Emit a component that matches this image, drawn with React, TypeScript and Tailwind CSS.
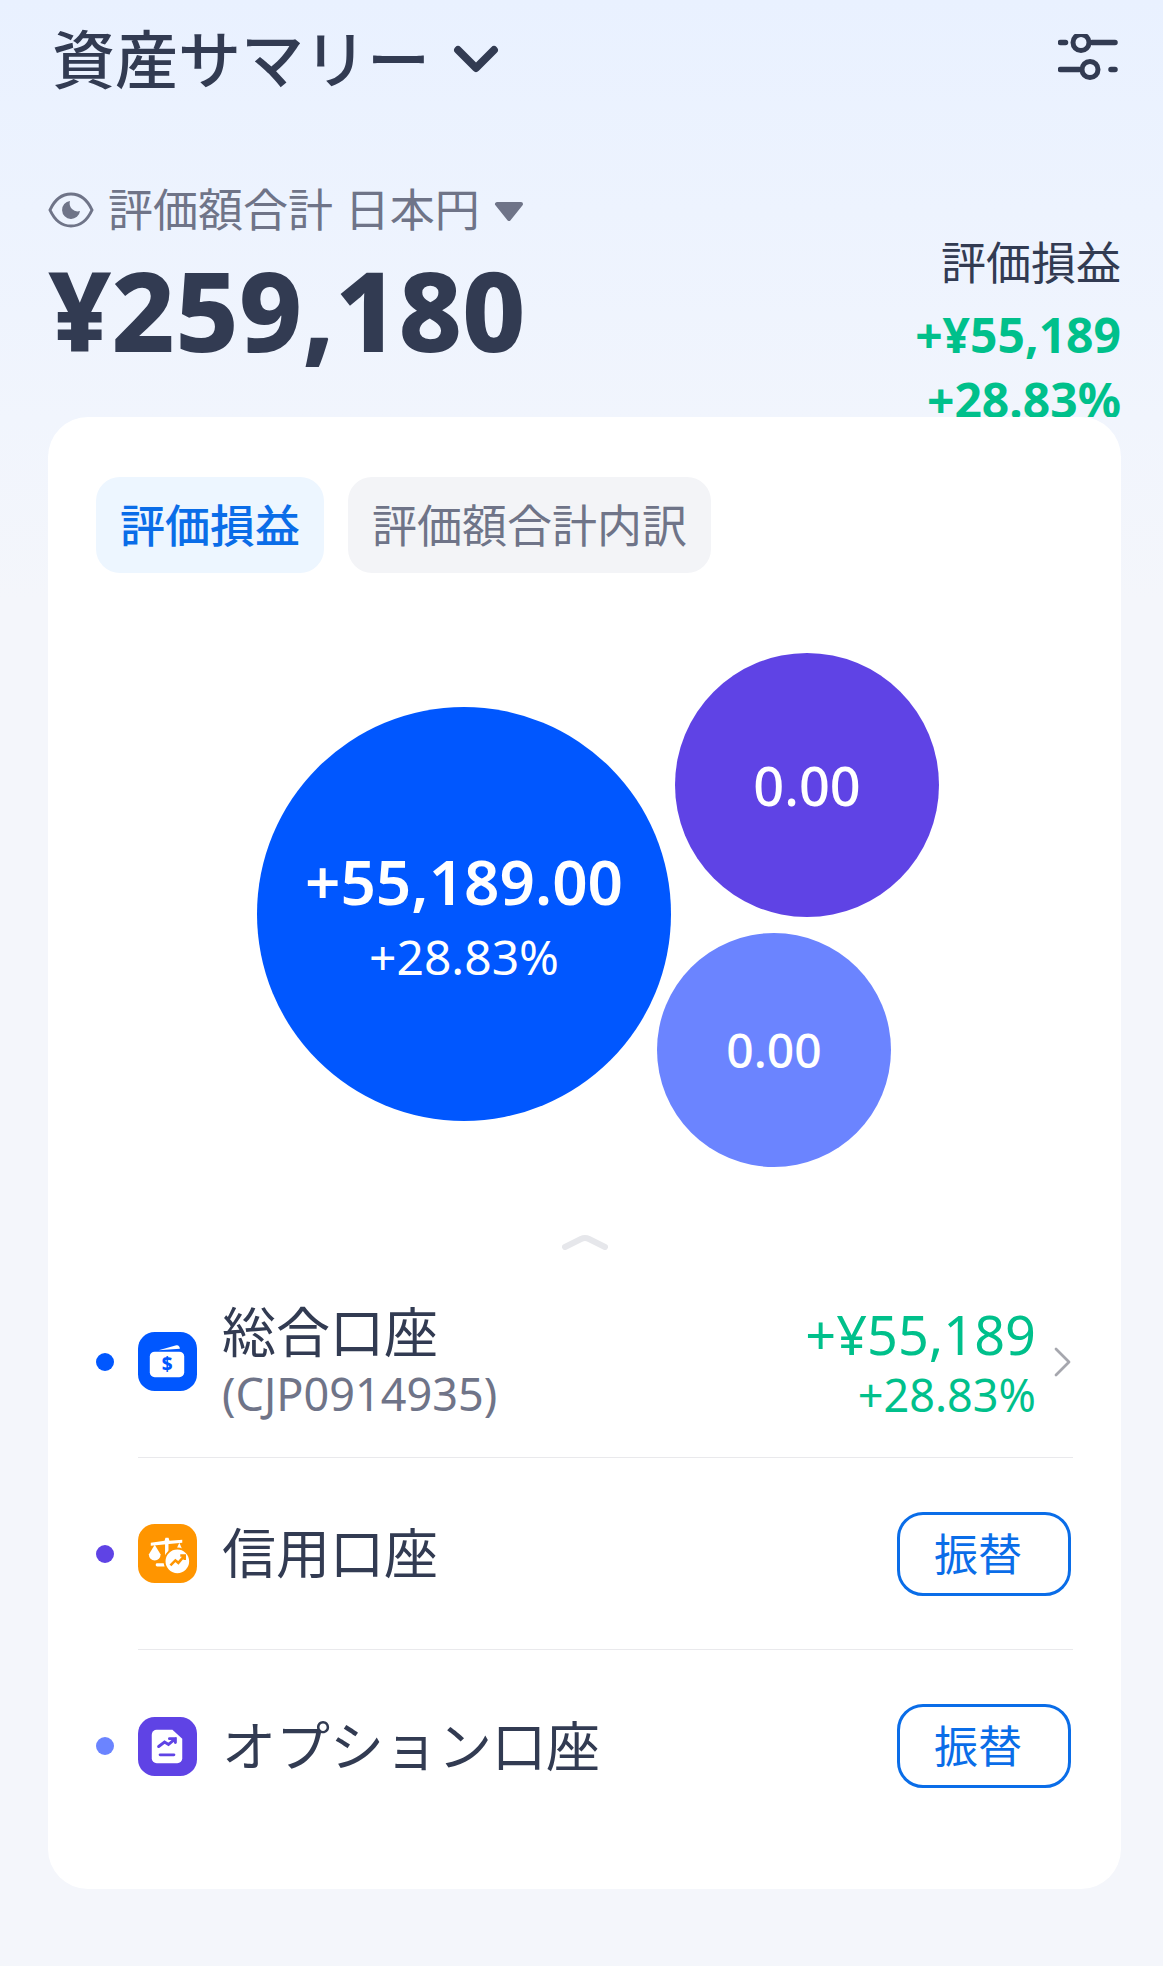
import * as React from "react";
import { ChevronDown } from "lucide-react";

const CJK = "font-['Noto_Sans','Noto_Sans_CJK_JP',sans-serif]";

const SlidersIcon = () => (
  <svg width="60" height="50" viewBox="0 0 60 50" fill="none" stroke="#323b52" strokeWidth="5.5" strokeLinecap="round">
    <path d="M2.500 8.500h5M34 8.500h23M2.500 35.500h19M53 35.500h4" />
    <circle cx="23" cy="8.500" r="8" strokeWidth="5" />
    <circle cx="32" cy="35.500" r="8" strokeWidth="5" />
  </svg>
);

const EyeIcon = () => (
  <svg width="46" height="36" viewBox="0 0 46 36" fill="none">
    <path d="M2 18C7 7 15 2 23 2s16 5 21 16c-5 11-13 16-21 16S7 29 2 18Z" stroke="#6f7488" strokeWidth="3" />
    <path d="M22 9a9 9 0 1 0 10 10 8 8 0 0 1-10-10Z" fill="#6f7488" />
  </svg>
);

const CaretIcon = () => (
  <svg width="30" height="21" viewBox="0 0 30 21" className="ml-[14px] mt-[4px]">
    <path d="M3 3h24L15 18Z" fill="#6f7488" stroke="#6f7488" strokeWidth="4" strokeLinejoin="round" />
  </svg>
);

const WalletIcon = () => (
  <svg width="59" height="59" viewBox="0 0 60 60">
    <rect width="60" height="60" rx="17" fill="#0057ff" />
    <path d="M21 18.500l18-5c2-.4 3.300.8 3.600 3.500Z" fill="#fff" />
    <rect x="12" y="20" width="35" height="26" rx="5" fill="#fff" />
    <text x="29.500" y="39.500" textAnchor="middle" fontSize="19" fontWeight="800" fill="#0057ff" fontFamily="'Noto Sans',sans-serif">$</text>
  </svg>
);

const ScaleIcon = () => (
  <svg width="59" height="59" viewBox="0 0 60 60">
    <rect width="60" height="60" rx="17" fill="#ff9500" />
    <g fill="#fff">
      <path d="M13 19l14-2 1-3h3l1 3 13-1v3l-32 3Z" />
      <path d="M17 21l-6 10a6 6 0 0 0 12 0Z" />
      <rect x="27.500" y="15" width="3.500" height="26" />
      <rect x="18" y="40" width="14" height="3.200" rx="1.500" />
      <path d="M42 19l4 9h-8Z" />
      <circle cx="40" cy="38" r="13" stroke="#ff9500" strokeWidth="2" />
    </g>
    <path d="M33 42l5-5 3 2.500 6-7M43 32h4.500v4.500" fill="none" stroke="#ff9500" strokeWidth="2.600" />
  </svg>
);

const ChartDocIcon = () => (
  <svg width="59" height="59" viewBox="0 0 60 60">
    <rect width="60" height="60" rx="17" fill="#5f43e5" />
    <path d="M19 13h16l10 9v20a5 5 0 0 1-5 5H19a5 5 0 0 1-5-5V18a5 5 0 0 1 5-5Z" fill="#fff" />
    <path d="M21 30l6-4.500 4 2.500 7-6M32 22h6v4" fill="none" stroke="#5f43e5" strokeWidth="3" strokeLinecap="round" />
    <rect x="21" y="37" width="17" height="3" rx="1.500" fill="#5f43e5" />
  </svg>
);

const TransferButton = () => (
  <button className="mr-[2px] flex h-[84px] w-[174px] items-center justify-center rounded-[26px] border-[3px] border-[#0a6de8] pr-[12px] text-[44px] text-[#0a6de8]">
    振替
  </button>
);

const AccountRow = ({
  dot,
  icon,
  last,
  children,
}: {
  dot: string;
  icon: React.ReactNode;
  last?: boolean;
  children: React.ReactNode;
}) => (
  <div className="flex items-center">
    <span className="mr-[24px] h-[18px] w-[18px] rounded-full" style={{ background: dot }} />
    <div className={`flex h-[192px] flex-1 items-center border-[#e9e9ec] ${last ? "" : "border-b"}`}>
      <div className="mr-[25px] shrink-0">{icon}</div>
      {children}
    </div>
  </div>
);

export default function App() {
  return (
    <div className={`h-[1966px] w-[1163px] overflow-hidden bg-[linear-gradient(#e9f1ff_0px,#f1f5fd_420px,#f4f6fb_600px)] ${CJK} text-[#323b52]`}>
      {/* header block, the card cuts off whatever runs past its height */}
      <div className="h-[417px] overflow-hidden px-[42px]">
        <div className="flex h-[117px] items-center justify-between pl-[10px] pr-[3px]">
          <div className="flex items-center">
            <h1 className="text-[63px] font-medium leading-none">資産サマリー</h1>
            <ChevronDown size={72} strokeWidth={2.6} className="ml-[10px]" />
          </div>
          <SlidersIcon />
        </div>
        <div className="mt-[70px] flex items-center pl-[6px] text-[45px] leading-none text-[#6f7488]">
          <EyeIcon />
          <span className="ml-[14px]">評価額合計 日本円</span>
          <CaretIcon />
        </div>
        <div className="flex items-start justify-between pl-[6px]">
          <div className="mt-[2px] text-[110px] font-extrabold leading-[150px]">¥259,180</div>
          <div className="mt-[1px] text-right">
            <div className="text-[45px] leading-[60px]">評価損益</div>
            <div className="mt-[9px] text-[48px] font-bold leading-[65px] text-[#00c08b]">+¥55,189</div>
            <div className="text-[48px] font-bold leading-[65px] text-[#00c08b]">+28.83%</div>
          </div>
        </div>
      </div>

      <main className="ml-[48px] mr-[42px] h-[1472px] rounded-[40px] bg-white pl-[48px] pr-[48px] pt-[60px]">
        <div className="flex gap-[24px] text-[45px] leading-none">
          <div className="flex h-[96px] w-[228px] items-center justify-center rounded-[24px] bg-[#edf6ff] font-medium text-[#0a6de8]">評価損益</div>
          <div className="flex h-[96px] w-[363px] items-center justify-center rounded-[24px] bg-[#f3f4f7] text-[#6f7488]">評価額合計内訳</div>
        </div>

        {/* bubble chart, each bubble sits at its own spot on the canvas */}
        <div className="relative h-[618px] text-white">
          <div className="absolute left-[161px] top-[134px] flex h-[414px] w-[414px] flex-col items-center justify-center rounded-full bg-[#0057ff]">
            <div className="text-[62px] font-semibold leading-[84px]">+55,189.00</div>
            <div className="mt-[2px] text-[48px] leading-[64px]">+28.83%</div>
          </div>
          <div className="absolute left-[579px] top-[80px] flex h-[264px] w-[264px] items-center justify-center rounded-full bg-[#5f43e5] text-[54px] font-medium">0.00</div>
          <div className="absolute left-[561px] top-[360px] flex h-[234px] w-[234px] items-center justify-center rounded-full bg-[#6b84ff] text-[48px] font-medium">0.00</div>
        </div>

        <div className="flex h-[75px] items-start justify-center pt-[43px]">
          <svg width="46" height="16" viewBox="0 0 46 16" fill="none">
            <path d="M3 13 19 5c3-1.500 5-1.500 8 0l16 8" stroke="#e6e7eb" strokeWidth="6" strokeLinecap="round" />
          </svg>
        </div>

        <AccountRow dot="#0057ff" icon={<WalletIcon />}>
          <div className="flex-1">
            <div className="text-[54px] leading-[62px]">総合口座</div>
            <div className="mt-[3px] text-[45px] leading-[56px] text-[#6f7488]">(CJP0914935)</div>
          </div>
          <div className="text-right text-[#00c08b]">
            <div className="text-[54px] leading-[64px]">+¥55,189</div>
            <div className="mt-[2px] text-[45px] leading-[54px]">+28.83%</div>
          </div>
          <svg width="18" height="30" viewBox="0 0 18 30" fill="none" className="ml-[18px] mr-[1px]">
            <path d="M2 2l13 13L2 28" stroke="#a6a7ae" strokeWidth="2.800" strokeLinecap="round" strokeLinejoin="round" />
          </svg>
        </AccountRow>
        <AccountRow dot="#5f43e5" icon={<ScaleIcon />}>
          <div className="flex-1 text-[54px]">信用口座</div>
          <TransferButton />
        </AccountRow>
        <AccountRow dot="#6b84ff" icon={<ChartDocIcon />} last>
          <div className="flex-1 text-[54px]">オプション口座</div>
          <TransferButton />
        </AccountRow>
      </main>
    </div>
  );
}
